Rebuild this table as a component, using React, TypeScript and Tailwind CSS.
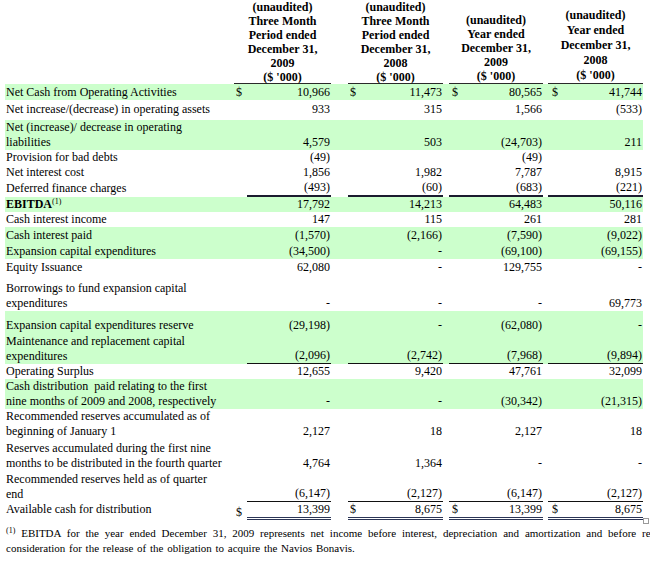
import React from 'react';

type Line = 'thick' | 'single' | 'double';

interface Row {
  label: string[];
  vals: [string, string, string, string];
  green?: boolean;
  bold?: boolean;
  sup?: boolean;
  dollar?: boolean;
  pt: string;
  pb: string;
  line?: Line;
}

const lineClass: Record<Line, string> = {
  thick: 'border-b-2 border-[#1b1b2f]',
  single: 'border-b border-[#111111]',
  double: 'border-b-[3px] border-double border-[#2b3556]',
};

const rows: Row[] = [
  { label: ['Net Cash from Operating Activities'], vals: ['10,966', '11,473', '80,565', '41,744'], dollar: true, green: true, pt: 'pt-px', pb: 'pb-0' },
  { label: ['Net increase/(decrease) in operating assets'], vals: ['933', '315', '1,566', '(533)'], pt: 'pt-[2px]', pb: 'pb-[3px]' },
  { label: ['Net (increase)/ decrease in operating', 'liabilities'], vals: ['4,579', '503', '(24,703)', '211'], green: true, pt: 'pt-0', pb: 'pb-0' },
  { label: ['Provision for bad debts'], vals: ['(49)', '', '(49)', ''], pt: 'pt-0', pb: 'pb-0' },
  { label: ['Net interest cost'], vals: ['1,856', '1,982', '7,787', '8,915'], pt: 'pt-0', pb: 'pb-0' },
  { label: ['Deferred finance charges'], vals: ['(493)', '(60)', '(683)', '(221)'], pt: 'pt-px', pb: 'pb-0', line: 'thick' },
  { label: ['EBITDA'], vals: ['17,792', '14,213', '64,483', '50,116'], green: true, bold: true, sup: true, pt: 'pt-0', pb: 'pb-0' },
  { label: ['Cash interest income'], vals: ['147', '115', '261', '281'], pt: 'pt-0', pb: 'pb-0' },
  { label: ['Cash interest paid'], vals: ['(1,570)', '(2,166)', '(7,590)', '(9,022)'], green: true, pt: 'pt-px', pb: 'pb-0' },
  { label: ['Expansion capital expenditures'], vals: ['(34,500)', '-', '(69,100)', '(69,155)'], green: true, pt: 'pt-px', pb: 'pb-0' },
  { label: ['Equity Issuance'], vals: ['62,080', '-', '129,755', '-'], pt: 'pt-px', pb: 'pb-0' },
  { label: ['Borrowings to fund expansion capital', 'expenditures'], vals: ['-', '-', '-', '69,773'], pt: 'pt-[6px]', pb: 'pb-0' },
  { label: ['Expansion capital expenditures reserve'], vals: ['(29,198)', '-', '(62,080)', '-'], green: true, pt: 'pt-[7px]', pb: 'pb-px' },
  { label: ['Maintenance and replacement capital', 'expenditures'], vals: ['(2,096)', '(2,742)', '(7,968)', '(9,894)'], green: true, pt: 'pt-0', pb: 'pb-0', line: 'single' },
  { label: ['Operating Surplus'], vals: ['12,655', '9,420', '47,761', '32,099'], pt: 'pt-0', pb: 'pb-0' },
  { label: ['Cash distribution  paid relating to the first', 'nine months of 2009 and 2008, respectively'], vals: ['-', '-', '(30,342)', '(21,315)'], green: true, pt: 'pt-0', pb: 'pb-0' },
  { label: ['Recommended reserves accumulated as of', 'beginning of January 1'], vals: ['2,127', '18', '2,127', '18'], pt: 'pt-0', pb: 'pb-0' },
  { label: ['Reserves accumulated during the first nine', 'months to be distributed in the fourth quarter'], vals: ['4,764', '1,364', '-', '-'], pt: 'pt-[2px]', pb: 'pb-0' },
  { label: ['Recommended reserves held as of quarter', 'end'], vals: ['(6,147)', '(2,127)', '(6,147)', '(2,127)'], pt: 'pt-px', pb: 'pb-0', line: 'single' },
  { label: ['Available cash for distribution'], vals: ['13,399', '8,675', '13,399', '8,675'], dollar: true, pt: 'pt-0', pb: 'pb-0', line: 'double' },
];

// columns 2..4 (col 1 has its own $ cell)
const colWidths = ['w-[95px] pl-[2px]', 'w-[94px] pl-[3px]', 'w-[95px] pl-[4px]'];
const gaps = ['w-[17px]', 'w-[6px]', 'w-[5px]'];

function ValueCell({ row, i }: { row: Row; i: number }) {
  const border = row.line ? lineClass[row.line] : '';
  if (i === 0) {
    return (
      <>
        <div className={`w-[13px] pl-[2px] flex items-end ${row.pb}`}>{row.dollar ? '$' : ''}</div>
        <div className={`w-[84px] pr-[1px] flex items-end justify-end ${row.pb} ${border}`}>{row.vals[0]}</div>
      </>
    );
  }
  return (
    <>
      <div className={`${gaps[i - 1]} shrink-0`} />
      <div className={`${colWidths[i - 1]} pr-[1px] flex items-end justify-between ${row.pb} ${border}`}>
        <span>{row.dollar ? '$' : ''}</span>
        <span>{row.vals[i]}</span>
      </div>
    </>
  );
}

function HeaderCell({ lines, className }: { lines: string[]; className: string }) {
  return (
    <div className={`flex flex-col items-center text-center font-bold border-b border-[#2a2a2a] ${className}`}>
      {lines.map((l) => (
        <span key={l}>{l}</span>
      ))}
    </div>
  );
}

export default function App() {
  return (
    <div className="relative w-[650px] h-[564px] overflow-hidden bg-white text-black text-[12px] leading-[15px] font-['Liberation_Serif',serif]">
      <div className="pl-[5px]">
        <div className="w-[638px]">
          {/* header */}
          <div className="flex h-[84px] leading-[14px]">
            <div className="w-[229px]" />
            <HeaderCell
              className="w-[97px] pt-0"
              lines={['(unaudited)', 'Three Month', 'Period ended', 'December 31,', '2009', "($ '000)"]}
            />
            <div className="w-[17px]" />
            <HeaderCell
              className="w-[95px] pt-0"
              lines={['(unaudited)', 'Three Month', 'Period ended', 'December 31,', '2008', "($ '000)"]}
            />
            <div className="w-[6px]" />
            <HeaderCell
              className="w-[94px] pt-[13px]"
              lines={['(unaudited)', 'Year ended', 'December 31,', '2009', "($ '000)"]}
            />
            <div className="w-[5px]" />
            <HeaderCell
              className="w-[95px] pt-[8px] leading-[15px]"
              lines={['(unaudited)', 'Year ended', 'December 31,', '2008', "($ '000)"]}
            />
          </div>

          {/* body */}
          {rows.map((row, r) => (
            <div key={r} className={`flex ${row.green ? 'bg-[#ccffcc]' : ''}`}>
              <div className={`w-[229px] pl-[1px] whitespace-pre ${row.pt} ${row.pb}`}>
                {row.label.map((l, k) => (
                  <div key={k} className={row.bold ? 'font-bold' : ''}>
                    {l}
                    {row.sup && <sup className="text-[8px] leading-none font-normal">(1)</sup>}
                  </div>
                ))}
              </div>
              {[0, 1, 2, 3].map((i) => (
                <ValueCell key={i} row={row} i={i} />
              ))}
            </div>
          ))}
        </div>
      </div>

      {/* footnote */}
      <div className="mt-[6px] pl-[6px] text-[11px] leading-[15px]">
        <div className="whitespace-nowrap [word-spacing:3.1px]">
          <span className="relative -top-[4px] text-[8px] leading-none">(1)</span> EBITDA for the year ended December 31, 2009 represents net income before interest, depreciation and amortization and before reflecting the
        </div>
        <div className="whitespace-nowrap [word-spacing:1px]">
          consideration for the release of the obligation to acquire the Navios Bonavis.
        </div>
      </div>

      <div className="absolute left-[643px] top-[518px] w-[6px] h-[6px] border border-[#9a9a9a]" />
    </div>
  );
}
